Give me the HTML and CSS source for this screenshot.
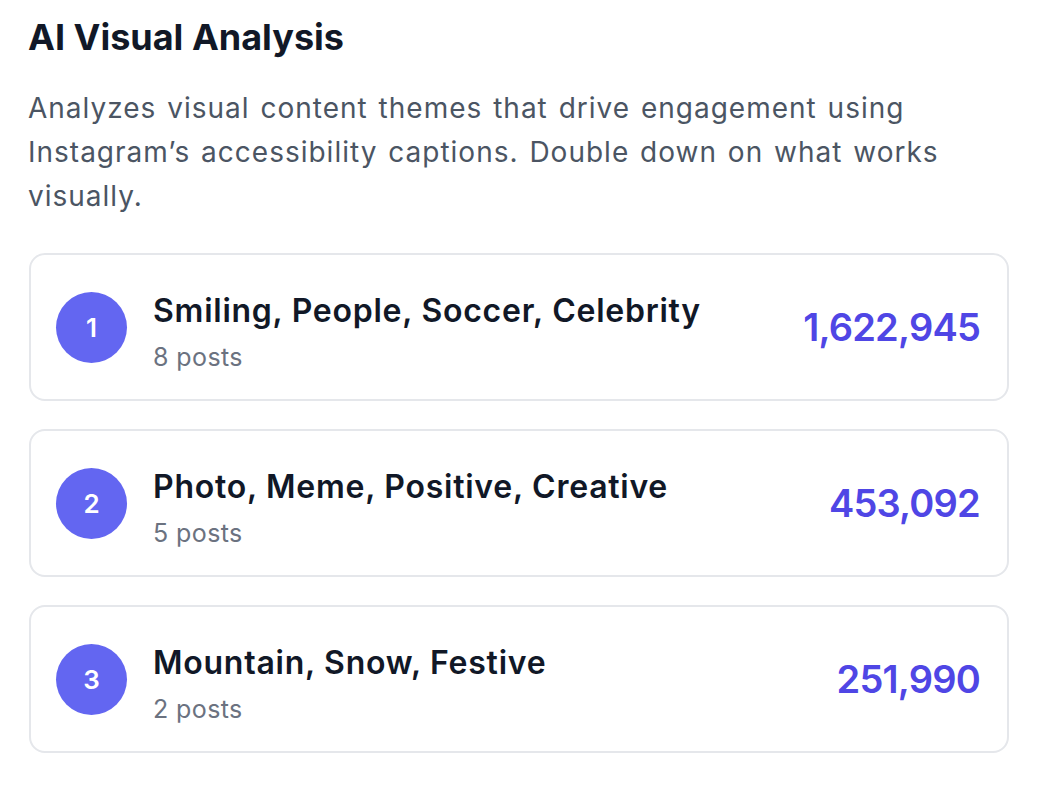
FILE: index.html
```html
<!DOCTYPE html>
<html lang="en">
<head>
<meta charset="utf-8">
<title>AI Visual Analysis</title>
<link rel="stylesheet" href="styles.css">
</head>
<body>
<section class="panel">
  <h2 class="title">AI Visual Analysis</h2>
  <p class="desc">Analyzes visual content themes that drive engagement using Instagram’s accessibility captions. Double down on what works visually.</p>
  <ul class="list">
    <li class="card">
      <span class="rank">1</span>
      <div class="info">
        <div class="name">Smiling, People, Soccer, Celebrity</div>
        <div class="count">8 posts</div>
      </div>
      <span class="value">1,622,945</span>
    </li>
    <li class="card">
      <span class="rank">2</span>
      <div class="info">
        <div class="name">Photo, Meme, Positive, Creative</div>
        <div class="count">5 posts</div>
      </div>
      <span class="value">453,092</span>
    </li>
    <li class="card">
      <span class="rank">3</span>
      <div class="info">
        <div class="name">Mountain, Snow, Festive</div>
        <div class="count">2 posts</div>
      </div>
      <span class="value">251,990</span>
    </li>
  </ul>
</section>
</body>
</html>
```
FILE: styles.css
```css
* { box-sizing: border-box; }
html, body { margin: 0; padding: 0; background: #ffffff; }
body {
  font-family: Inter, "Noto Sans", "Liberation Sans", sans-serif;
  color: #111827;
}
.panel {
  padding: 13px 33px 0 28px;
  width: 1042px;
}
.title {
  margin: 0;
  font-size: 36px;
  line-height: 48px;
  font-weight: 700;
  color: #111827;
}
.desc {
  margin: 25px 0 0 0;
  font-size: 28px;
  line-height: 44px;
  letter-spacing: 1px;
  word-spacing: 2px;
  color: #4b5563;
  font-weight: 400;
}
.list {
  list-style: none;
  margin: 35px 0 0 1px;
  padding: 0;
  display: flex;
  flex-direction: column;
  gap: 28px;
}
.card {
  display: flex;
  align-items: center;
  height: 148px;
  border: 2px solid #e5e7eb;
  border-radius: 16px;
  padding: 0 27px 0 25px;
}
.rank {
  flex: none;
  width: 71px;
  height: 71px;
  border-radius: 50%;
  background: #6366f1;
  color: #ffffff;
  font-size: 26px;
  font-weight: 600;
  display: flex;
  align-items: center;
  justify-content: center;
}
.info {
  flex: 1;
  margin-left: 26px;
  display: flex;
  flex-direction: column;
}
.name {
  font-size: 32px;
  line-height: 54px;
  font-weight: 600;
  letter-spacing: 0.75px;
  color: #111827;
}
.count {
  font-size: 25px;
  line-height: 28px;
  letter-spacing: 0.4px;
  color: #6b7280;
  margin-top: 5px;
}
.value {
  flex: none;
  font-size: 38px;
  font-weight: 600;
  letter-spacing: -0.8px;
  color: #4f46e5;
}
```
